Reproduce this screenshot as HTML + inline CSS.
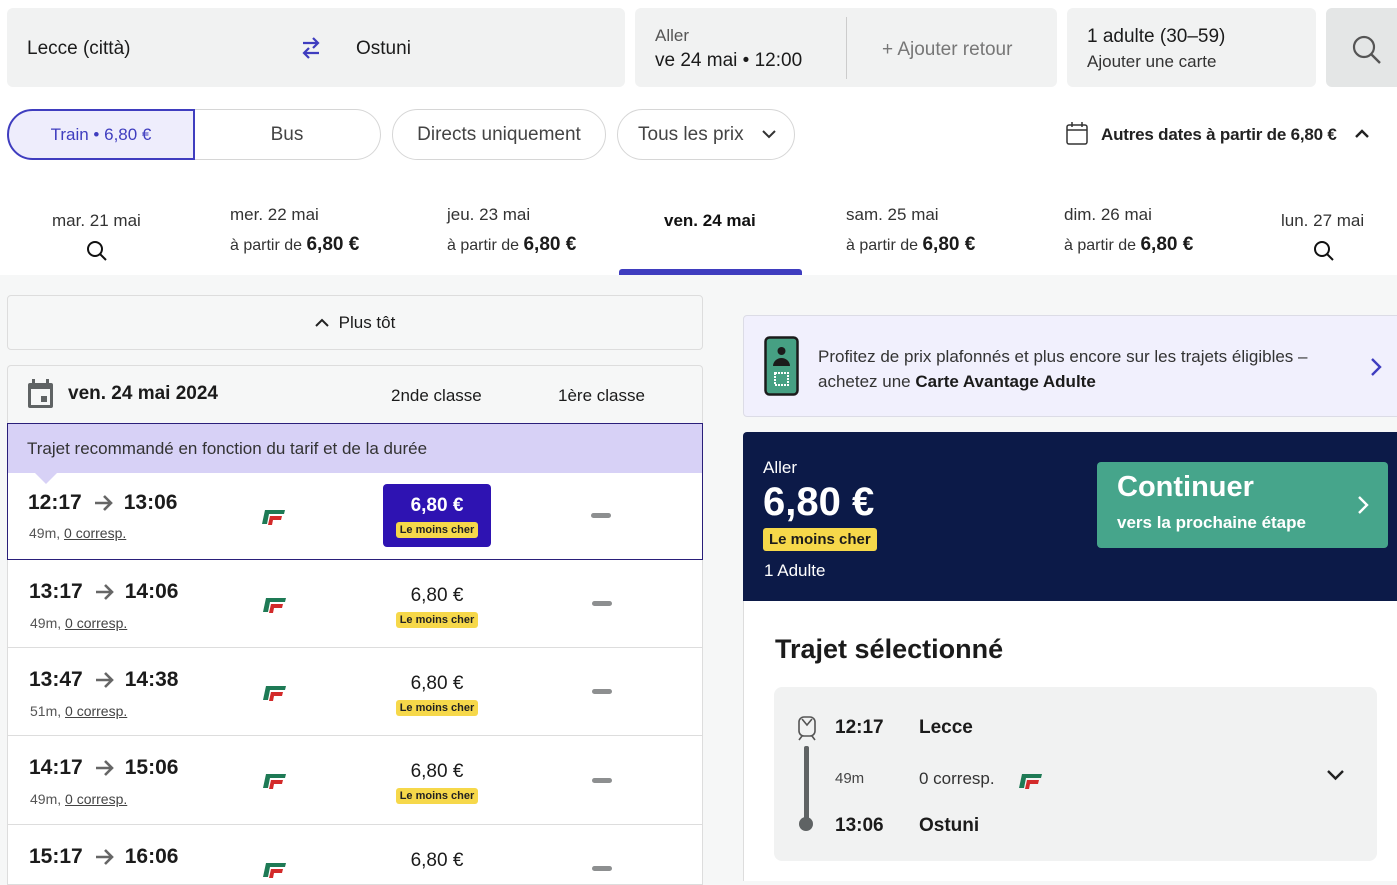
<!DOCTYPE html>
<html><head><meta charset="utf-8"><style>
*{box-sizing:border-box;margin:0;padding:0}
body{width:1397px;height:877px;overflow:hidden;background:#f6f7f7;font-family:"Liberation Sans",Arial,sans-serif;color:#1b1b1b;position:relative}
.a{position:absolute}
.top{position:absolute;left:0;top:0;width:1397px;height:275px;background:#fff}
.box{position:absolute;background:#f1f2f2;border-radius:6px}
.pill{position:absolute;border:1px solid #d6d6d6;border-radius:26px;height:51px;top:109px;font-size:19px;color:#444;display:flex;align-items:center;justify-content:center;background:#fff}
.tab{position:absolute;top:205px;font-size:16px;color:#333}
.tab b{font-size:19px;color:#1b1b1b}
.row{position:absolute;left:7px;width:696px;background:#fff;border:1px solid #ddd;border-top:none}
.t{position:absolute;left:21px;font-size:21px;font-weight:bold;display:flex;align-items:center}
.t svg{margin:0 10px 0 12px}
.sub{position:absolute;left:22px;font-size:14px;color:#555}
.sub u{color:#444}
.price{position:absolute;left:384px;width:90px;text-align:center;font-size:19px}
.tag{display:inline-block;background:#f6d84a;color:#222;font-size:11px;font-weight:bold;padding:2px 4px;border-radius:3px}
.dash{position:absolute;left:584px;width:20px;height:5px;border-radius:3px;background:#8d8f90}
.fs{position:absolute;left:250px}
</style></head><body>
<div class="top"></div>
<div class="box" style="left:7px;top:8px;width:618px;height:79px"></div>
<div class="a" style="left:27px;top:38px;font-size:19px">Lecce (città)</div>
<svg class="a" style="left:300px;top:36px" width="22" height="24" viewBox="0 0 22 24"><path d="M3 7h15M13 2l5 5-5 5M19 17H4M9 12l-5 5 5 5" stroke="#3f3dbf" stroke-width="2.2" fill="none"/></svg>
<div class="a" style="left:356px;top:38px;font-size:19px">Ostuni</div>
<div class="box" style="left:635px;top:8px;width:422px;height:79px"></div>
<div class="a" style="left:655px;top:26px;font-size:17px;color:#555">Aller</div>
<div class="a" style="left:655px;top:50px;font-size:19px">ve 24 mai • 12:00</div>
<div class="a" style="left:846px;top:17px;width:1px;height:62px;background:#ccc"></div>
<div class="a" style="left:882px;top:39px;font-size:19px;color:#777">+ Ajouter retour</div>
<div class="box" style="left:1067px;top:8px;width:249px;height:79px"></div>
<div class="a" style="left:1087px;top:26px;font-size:19px">1 adulte (30–59)</div>
<div class="a" style="left:1087px;top:52px;font-size:17px;color:#333">Ajouter une carte</div>
<div class="box" style="left:1326px;top:8px;width:80px;height:79px;background:#e4e6e6"></div>
<svg class="a" style="left:1351px;top:34px" width="32" height="32" viewBox="0 0 32 32"><circle cx="13" cy="13" r="10" stroke="#555" stroke-width="2.2" fill="none"/><path d="M20.5 20.5L29 29" stroke="#555" stroke-width="2.4"/></svg>
<div class="pill" style="left:194px;width:187px;border-radius:0 26px 26px 0;border-left:none">Bus</div>
<div class="pill" style="left:7px;width:188px;border:2px solid #3f3dbf;border-radius:26px 0 0 26px;background:#eeedfc;color:#3f3dbf;font-size:17px">Train • 6,80 €</div>
<div class="pill" style="left:392px;width:214px">Directs uniquement</div>
<div class="pill" style="left:617px;width:178px;justify-content:flex-start;padding-left:20px">Tous les prix<svg style="margin-left:18px" width="14" height="9" viewBox="0 0 14 9"><path d="M1 1l6 6 6-6" stroke="#333" stroke-width="2" fill="none"/></svg></div>
<svg class="a" style="left:1066px;top:122px" width="22" height="23" viewBox="0 0 22 23"><rect x="1" y="3" width="20" height="19" rx="2" stroke="#333" stroke-width="1.5" fill="none"/><path d="M1 8h20M6 0v5M16 0v5" stroke="#333" stroke-width="1.5"/></svg>
<div class="a" style="left:1101px;top:125px;font-size:17px;font-weight:bold;color:#222;letter-spacing:-0.2px">Autres dates à partir de 6,80 €</div>
<svg class="a" style="left:1355px;top:129px" width="14" height="9" viewBox="0 0 14 9"><path d="M1 8l6-6 6 6" stroke="#222" stroke-width="2.4" fill="none"/></svg>
<div class="tab" style="left:52px;top:211px;font-size:17px">mar. 21 mai</div>
<svg class="a" style="left:86px;top:240px" width="22" height="22" viewBox="0 0 22 22"><circle cx="9" cy="9" r="7" stroke="#111" stroke-width="2" fill="none"/><path d="M14 14l6 6" stroke="#111" stroke-width="2"/></svg>
<div class="tab" style="left:230px;font-size:17px">mer. 22 mai</div><div class="tab" style="left:230px;top:234px">à partir de <b>6,80 €</b></div>
<div class="tab" style="left:447px;font-size:17px">jeu. 23 mai</div><div class="tab" style="left:447px;top:234px">à partir de <b>6,80 €</b></div>
<div class="tab" style="left:664px;top:211px;font-size:17px;font-weight:bold;color:#111">ven. 24 mai</div>
<div class="a" style="left:619px;top:269px;width:183px;height:6px;background:#3f3dbf;border-radius:3px 3px 0 0"></div>
<div class="tab" style="left:846px;font-size:17px">sam. 25 mai</div><div class="tab" style="left:846px;top:234px">à partir de <b>6,80 €</b></div>
<div class="tab" style="left:1064px;font-size:17px">dim. 26 mai</div><div class="tab" style="left:1064px;top:234px">à partir de <b>6,80 €</b></div>
<div class="tab" style="left:1281px;top:211px;font-size:17px">lun. 27 mai</div>
<svg class="a" style="left:1313px;top:240px" width="22" height="22" viewBox="0 0 22 22"><circle cx="9" cy="9" r="7" stroke="#111" stroke-width="2" fill="none"/><path d="M14 14l6 6" stroke="#111" stroke-width="2"/></svg>
<div class="a" style="left:7px;top:295px;width:696px;height:55px;border:1px solid #ddd;border-radius:4px;background:#f6f7f7;display:flex;align-items:center;justify-content:center;font-size:17px"><svg width="14" height="9" viewBox="0 0 14 9" style="margin-right:10px"><path d="M1 8l6-6 6 6" stroke="#222" stroke-width="2" fill="none"/></svg>Plus tôt</div>
<div class="a" style="left:7px;top:365px;width:696px;height:60px;border:1px solid #ddd;border-bottom:none;border-radius:4px 4px 0 0;background:#f6f7f7"></div>
<svg class="a" style="left:27px;top:379px" width="27" height="30" viewBox="0 0 27 30"><rect x="1" y="4" width="25" height="25" rx="2" fill="#5f6364"/><rect x="4" y="10" width="19" height="16" fill="#f6f7f7"/><rect x="14" y="17" width="6" height="6" fill="#5f6364"/><rect x="5" y="0" width="3" height="6" fill="#5f6364"/><rect x="19" y="0" width="3" height="6" fill="#5f6364"/></svg>
<div class="a" style="left:68px;top:383px;font-size:19px;font-weight:bold">ven. 24 mai 2024</div>
<div class="a" style="left:391px;top:386px;font-size:17px">2nde classe</div>
<div class="a" style="left:558px;top:386px;font-size:17px">1ère classe</div>
<div class="a" style="left:7px;top:423px;width:696px;height:137px;border:1px solid #2a1f7a;background:#fff"></div>
<div class="a" style="left:8px;top:424px;width:694px;height:49px;background:#d7d1f6"></div>
<div class="a" style="left:27px;top:439px;font-size:17px;color:#333">Trajet recommandé en fonction du tarif et de la durée</div>
<div class="a" style="left:35px;top:473px;width:0;height:0;border-left:11px solid transparent;border-right:11px solid transparent;border-top:11px solid #d7d1f6"></div>

<div class="a" style="left:7px;top:473px;width:696px;height:86px">
 <div class="t" style="top:18px">12:17<svg width="20" height="18" viewBox="0 0 20 18"><path d="M1 9h16M10 2l7 7-7 7" stroke="#666" stroke-width="2.6" fill="none"/></svg>13:06</div>
 <div class="sub" style="top:52px">49m, <u>0 corresp.</u></div>
 <svg class="fs" style="top:31px" width="30" height="22" viewBox="0 0 30 22"><path d="M8 6h20l-1 4H12l-2 10H5z" fill="#1e7a55"/><path d="M13 12h12l-1 4h-8l-1 5H11z" fill="#d32a2a"/></svg>
 <div class="a" style="left:376px;top:11px;width:108px;height:63px;background:#2e13b2;border-radius:4px;text-align:center;color:#fff;font-weight:bold;font-size:19px;padding-top:11px">6,80 €<br><span class="tag" style="margin-top:5px">Le moins cher</span></div>
 <div class="dash" style="top:40px"></div>
</div>
<div class="row" style="top:560px;height:88px"><div class="t" style="top:20px">13:17<svg width="20" height="18" viewBox="0 0 20 18"><path d="M1 9h16M10 2l7 7-7 7" stroke="#666" stroke-width="2.6" fill="none"/></svg>14:06</div><div class="sub" style="top:55px">49m, <u>0 corresp.</u></div>
<svg class="fs" style="top:32px" width="30" height="22" viewBox="0 0 30 22"><path d="M8 6h20l-1 4H12l-2 10H5z" fill="#1e7a55"/><path d="M13 12h12l-1 4h-8l-1 5H11z" fill="#d32a2a"/></svg>
<div class="price" style="top:25px">6,80 €<br><span class="tag">Le moins cher</span></div><div class="dash" style="top:41px"></div></div>
<div class="row" style="top:648px;height:88px"><div class="t" style="top:20px">13:47<svg width="20" height="18" viewBox="0 0 20 18"><path d="M1 9h16M10 2l7 7-7 7" stroke="#666" stroke-width="2.6" fill="none"/></svg>14:38</div><div class="sub" style="top:55px">51m, <u>0 corresp.</u></div>
<svg class="fs" style="top:32px" width="30" height="22" viewBox="0 0 30 22"><path d="M8 6h20l-1 4H12l-2 10H5z" fill="#1e7a55"/><path d="M13 12h12l-1 4h-8l-1 5H11z" fill="#d32a2a"/></svg>
<div class="price" style="top:25px">6,80 €<br><span class="tag">Le moins cher</span></div><div class="dash" style="top:41px"></div></div>
<div class="row" style="top:736px;height:89px"><div class="t" style="top:20px">14:17<svg width="20" height="18" viewBox="0 0 20 18"><path d="M1 9h16M10 2l7 7-7 7" stroke="#666" stroke-width="2.6" fill="none"/></svg>15:06</div><div class="sub" style="top:55px">49m, <u>0 corresp.</u></div>
<svg class="fs" style="top:32px" width="30" height="22" viewBox="0 0 30 22"><path d="M8 6h20l-1 4H12l-2 10H5z" fill="#1e7a55"/><path d="M13 12h12l-1 4h-8l-1 5H11z" fill="#d32a2a"/></svg>
<div class="price" style="top:25px">6,80 €<br><span class="tag">Le moins cher</span></div><div class="dash" style="top:42px"></div></div>
<div class="row" style="top:825px;height:60px"><div class="t" style="top:20px">15:17<svg width="20" height="18" viewBox="0 0 20 18"><path d="M1 9h16M10 2l7 7-7 7" stroke="#666" stroke-width="2.6" fill="none"/></svg>16:06</div>
<svg class="fs" style="top:32px" width="30" height="22" viewBox="0 0 30 22"><path d="M8 6h20l-1 4H12l-2 10H5z" fill="#1e7a55"/><path d="M13 12h12l-1 4h-8l-1 5H11z" fill="#d32a2a"/></svg>
<div class="price" style="top:25px">6,80 €</div><div class="dash" style="top:41px"></div></div>
<div class="a" style="left:743px;top:315px;width:660px;height:102px;background:#f1f0fd;border:1px solid #dcdce6;border-radius:4px"></div>
<svg class="a" style="left:764px;top:336px" width="35" height="60" viewBox="0 0 35 60"><rect x="1.5" y="1.5" width="32" height="57" rx="4" fill="#46a083" stroke="#1b1b1b" stroke-width="2.5"/><circle cx="17.5" cy="15" r="4" fill="#1b1b1b"/><path d="M9 30a8.5 8 0 0 1 17 0z" fill="#1b1b1b"/><rect x="11" y="37" width="13" height="12" fill="none" stroke="#fff" stroke-width="2" stroke-dasharray="2 1"/></svg>
<div class="a" style="left:818px;top:344px;font-size:17px;color:#333;line-height:25px">Profitez de prix plafonnés et plus encore sur les trajets éligibles –<br>achetez une <b style="color:#1b1b1b">Carte Avantage Adulte</b></div>
<svg class="a" style="left:1370px;top:357px" width="12" height="20" viewBox="0 0 12 20"><path d="M2 2l8 8-8 8" stroke="#3f3dbf" stroke-width="2.4" fill="none"/></svg>
<div class="a" style="left:743px;top:432px;width:660px;height:170px;background:#0c1a48;border-radius:4px 0 0 0"></div>
<div class="a" style="left:763px;top:458px;font-size:17px;color:#fff">Aller</div>
<div class="a" style="left:763px;top:480px;font-size:40px;font-weight:bold;color:#fff">6,80 €</div>
<div class="a" style="left:763px;top:528px;background:#f6d84a;border-radius:3px;padding:3px 6px;font-size:15px;font-weight:bold">Le moins cher</div>
<div class="a" style="left:764px;top:561px;font-size:17px;color:#fff">1 Adulte</div>
<div class="a" style="left:1097px;top:462px;width:291px;height:86px;background:#46a58b;border-radius:4px"></div>
<div class="a" style="left:1117px;top:471px;font-size:29px;font-weight:bold;color:#fff">Continuer</div>
<div class="a" style="left:1117px;top:513px;font-size:17px;font-weight:bold;color:#fff">vers la prochaine étape</div>
<svg class="a" style="left:1357px;top:495px" width="12" height="20" viewBox="0 0 12 20"><path d="M2 2l8 8-8 8" stroke="#fff" stroke-width="2.4" fill="none"/></svg>
<div class="a" style="left:743px;top:601px;width:660px;height:280px;background:#fff;border-left:1px solid #ddd"></div>
<div class="a" style="left:775px;top:634px;font-size:27px;font-weight:bold">Trajet sélectionné</div>
<div class="a" style="left:774px;top:687px;width:603px;height:174px;background:#f1f2f2;border-radius:8px"></div>
<svg class="a" style="left:796px;top:715px" width="22" height="26" viewBox="0 0 22 26"><rect x="3" y="2" width="16" height="19" rx="5" stroke="#555" stroke-width="1.6" fill="none"/><path d="M6 4l5 6 5-6M6 21l-3 4M16 21l3 4" stroke="#555" stroke-width="1.6" fill="none"/></svg>
<div class="a" style="left:804px;top:746px;width:5px;height:76px;background:#5f6364;border-radius:2px"></div>
<div class="a" style="left:799px;top:817px;width:14px;height:14px;border-radius:50%;background:#5f6364"></div>
<div class="a" style="left:835px;top:717px;font-size:19px;font-weight:bold">12:17</div>
<div class="a" style="left:919px;top:717px;font-size:19px;font-weight:bold">Lecce</div>
<div class="a" style="left:835px;top:770px;font-size:15px;color:#444">49m</div>
<div class="a" style="left:919px;top:769px;font-size:17px;color:#333">0 corresp.</div>
<svg class="a" style="left:1014px;top:768px" width="30" height="22" viewBox="0 0 30 22"><path d="M8 6h20l-1 4H12l-2 10H5z" fill="#1e7a55"/><path d="M13 12h12l-1 4h-8l-1 5H11z" fill="#d32a2a"/></svg>
<svg class="a" style="left:1326px;top:769px" width="19" height="12" viewBox="0 0 19 12"><path d="M2 2l7.5 7.5L17 2" stroke="#222" stroke-width="2.4" fill="none"/></svg>
<div class="a" style="left:835px;top:815px;font-size:19px;font-weight:bold">13:06</div>
<div class="a" style="left:919px;top:815px;font-size:19px;font-weight:bold">Ostuni</div>
</body></html>
